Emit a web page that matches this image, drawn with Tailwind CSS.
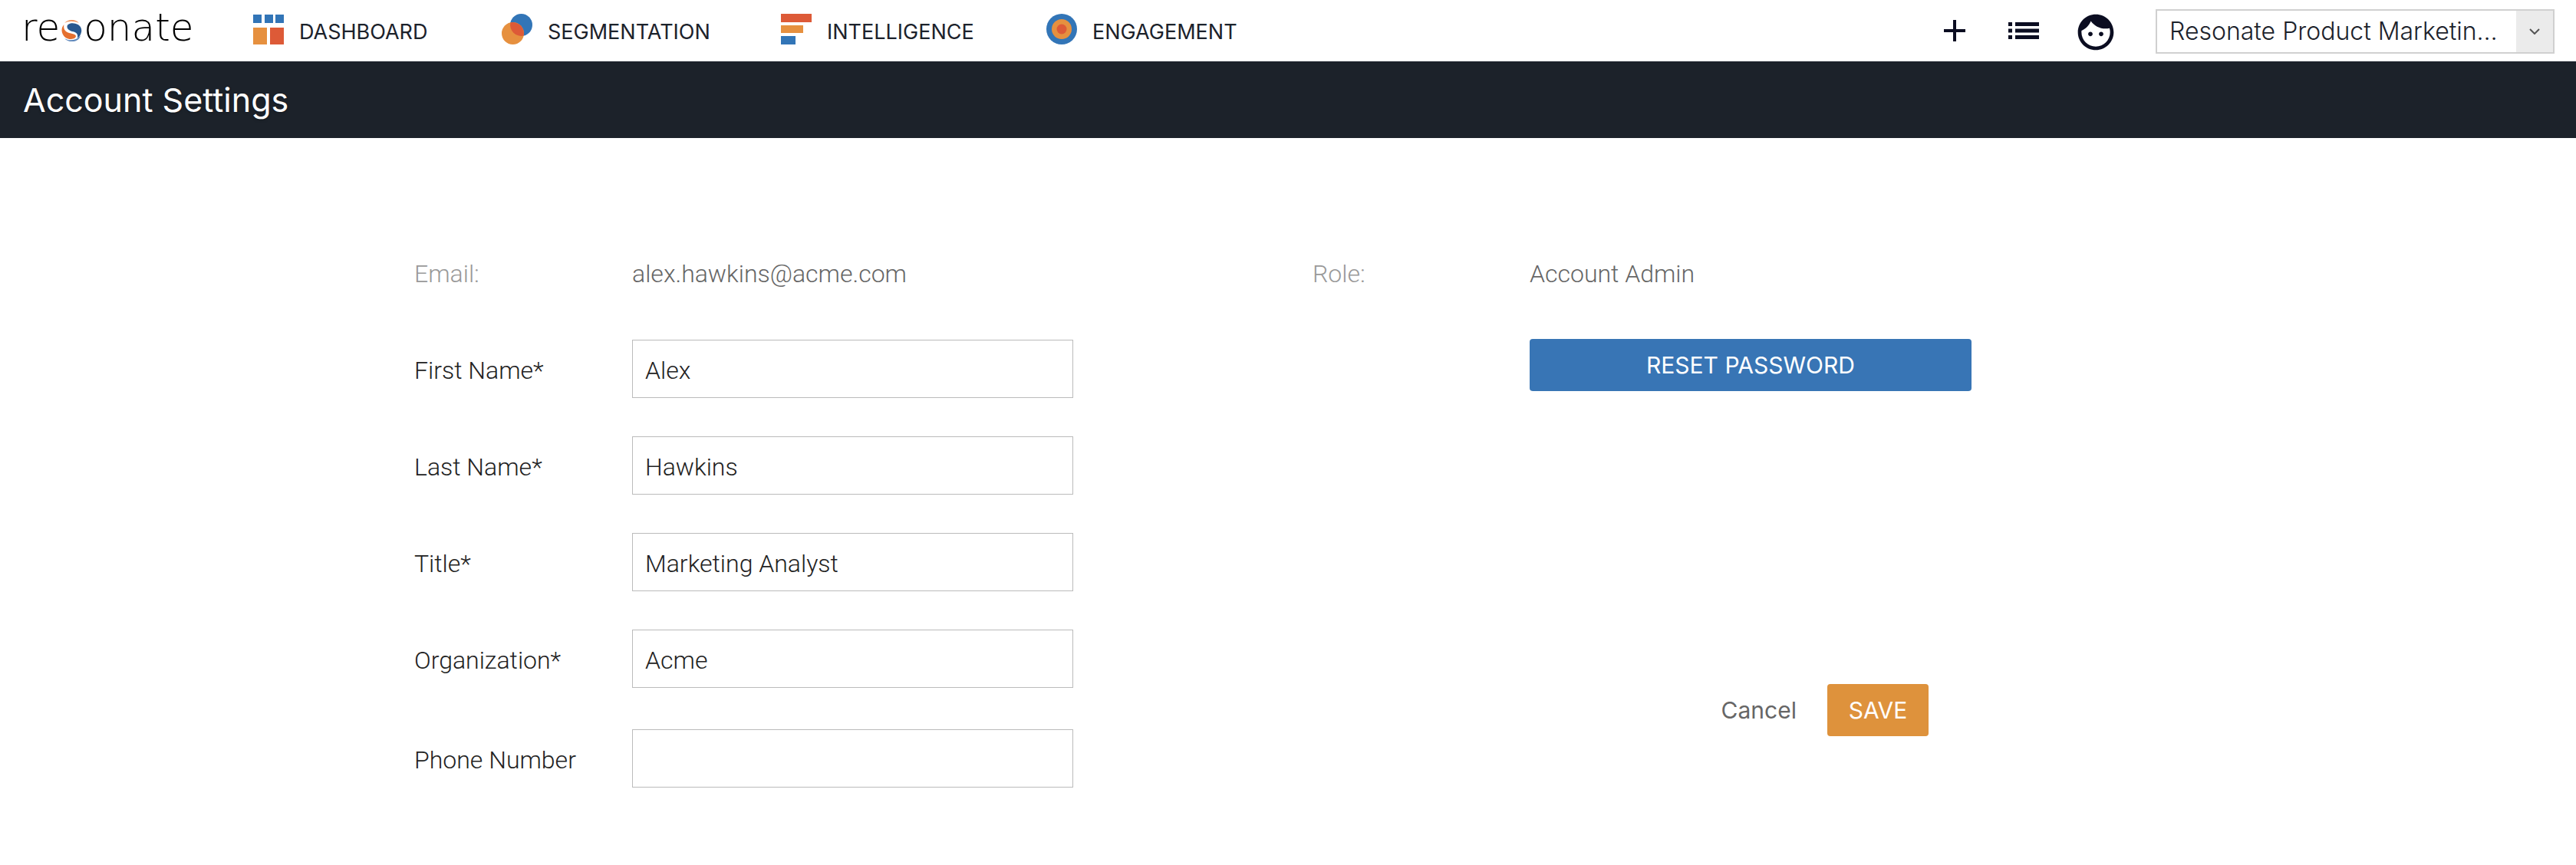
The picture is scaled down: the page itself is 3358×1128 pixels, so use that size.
<!DOCTYPE html>
<html lang="en">
  <head>
    <meta charset="UTF-8" />
    <meta name="viewport" content="width=device-width, initial-scale=1.0" />
    <title>Resonate - Account Settings</title>
    <script src="https://cdn.jsdelivr.net/npm/@tailwindcss/browser@4"></script>
  </head>
  <body class="bg-white font-[Roboto,sans-serif] text-[#222222]">
    <!-- Top navigation -->
    <header
      class="flex h-20 items-center px-7 font-[Inter,sans-serif] text-[#1c222b]"
    >
      <a
        href="#"
        aria-label="resonate"
        class="flex w-[302px] shrink-0 items-center gap-[2px] pb-2 font-['DejaVu_Sans',sans-serif] text-[50px] leading-[56px] font-extralight text-black"
      >
        <span>re</span>
        <svg class="mt-2 h-7 w-[27px] shrink-0" viewBox="0 0 80 84">
          <path d="M12 12C25-3 55-4 68 12C50 4 30 2 12 12z" fill="#ec8a52" />
          <path
            d="M22 26C22 14 40 10 54 14C72 18 80 32 78 46C76 58 70 68 62 72C66 58 60 50 46 46C34 42 22 38 22 26z"
            fill="#28588f"
          />
          <path
            d="M10 18C0 28-1 44 4 54C10 68 24 76 38 75C50 74 58 68 56 62C54 54 40 54 28 50C14 45 6 34 10 18z"
            fill="#e5702f"
          />
          <path
            d="M12 72C30 84 58 80 74 62C70 80 48 88 30 83C22 81 16 78 12 72z"
            fill="#5e87ba"
          />
        </svg>
        <span>onate</span>
      </a>

      <nav class="mb-1 flex items-center text-[27px] leading-8">
        <a href="#" class="flex w-[324px] items-center gap-5">
          <svg class="h-10 w-10 shrink-0" viewBox="0 0 40 40">
            <path d="M0 1h11v11H0zM15 1h11v11H15zM29 1h11v11H29z" fill="#3275b7" />
            <path d="M0 18h18v22H0z" fill="#e6903f" />
            <path d="M22 18h18v22H22z" fill="#dd5a37" />
          </svg>
          <span class="pt-2">DASHBOARD</span>
        </a>
        <a href="#" class="flex w-[364px] items-center gap-5">
          <svg class="h-10 w-10 shrink-0" viewBox="0 0 40 40">
            <circle cx="25.500" cy="14.500" r="14.500" fill="#3275b7" />
            <circle cx="14.500" cy="25.500" r="14.500" fill="#e6903f" />
            <path
              d="M11.400 11.400A14.500 14.500 0 0 1 28.600 28.600A14.500 14.500 0 0 1 11.400 11.400z"
              fill="#dd5a37"
            />
          </svg>
          <span class="pt-2">SEGMENTATION</span>
        </a>
        <a href="#" class="flex w-[346px] items-center gap-5">
          <svg class="h-10 w-10 shrink-0" viewBox="0 0 40 40">
            <path d="M0 0h40v11H0z" fill="#dd5a37" />
            <path d="M0 15h29v10H0z" fill="#e6903f" />
            <path d="M0 29h19v11H0z" fill="#3275b7" />
          </svg>
          <span class="pt-2">INTELLIGENCE</span>
        </a>
        <a href="#" class="flex items-center gap-5">
          <svg class="h-10 w-10 shrink-0" viewBox="0 0 40 40">
            <circle cx="20" cy="20" r="20" fill="#3275b7" />
            <circle cx="20" cy="20" r="13" fill="#e6903f" />
            <circle cx="20" cy="20" r="6.500" fill="#dd5a37" />
          </svg>
          <span class="pt-2">ENGAGEMENT</span>
        </a>
      </nav>

      <div class="ml-auto flex items-center text-[#0b0d21]">
        <button type="button" aria-label="Add" class="mr-[46px]">
          <svg class="h-12 w-12" viewBox="0 0 24 24" fill="currentColor">
            <path d="M19 13h-6v6h-2v-6H5v-2h6V5h2v6h6v2z" />
          </svg>
        </button>
        <button type="button" aria-label="Lists" class="mr-[46px]">
          <svg class="h-[22px] w-10" viewBox="0 0 40 22" fill="currentColor">
            <path
              d="M0 0h5v5H0zM9 0h31v5H9zM0 8.500h5v5H0zM9 8.500h31v5H9zM0 17h5v5H0zM9 17h31v5H9z"
            />
          </svg>
        </button>
        <button type="button" aria-label="Profile" class="mr-[50px] pt-1">
          <svg class="h-14 w-14" viewBox="0 0 24 24" fill="currentColor">
            <path
              d="M9 11.750c-.69 0-1.250.56-1.250 1.250s.56 1.250 1.250 1.250 1.250-.56 1.250-1.250-.56-1.250-1.250-1.250zm6 0c-.69 0-1.250.56-1.250 1.250s.56 1.250 1.250 1.250 1.250-.56 1.250-1.250-.56-1.250-1.250-1.250zM12 2C6.480 2 2 6.480 2 12s4.480 10 10 10 10-4.480 10-10S17.520 2 12 2zm0 18c-4.410 0-8-3.590-8-8 0-.29.02-.58.05-.86 2.360-1.050 4.230-2.980 5.210-5.370C11.070 8.330 14.050 10 17.420 10c.78 0 1.530-.09 2.250-.26.21.71.33 1.470.33 2.260 0 4.410-3.590 8-8 8z"
            />
          </svg>
        </button>
        <div
          class="mt-[2px] flex h-[58px] w-[520px] items-stretch border-2 border-[#d0d0d0] text-[#1c222b]"
        >
          <select
            aria-label="Account"
            class="min-w-0 flex-1 appearance-none bg-white pl-4 text-[32px] leading-9 font-light"
          >
            <option>Resonate Product Marketin…</option>
          </select>
          <span class="flex w-12 items-center justify-center bg-[#ebebeb]">
            <svg class="h-2 w-[14px]" viewBox="0 0 14 8" fill="none">
              <path d="M1 1l6 6 6-6" stroke="#555555" stroke-width="2" />
            </svg>
          </span>
        </div>
      </div>
    </header>

    <!-- Page title -->
    <div class="flex h-[100px] items-center bg-[#1c222a] px-[30px]">
      <h1
        class="font-[Inter,sans-serif] text-[43px] leading-[48px] text-white text-shadow-md"
      >
        Account Settings
      </h1>
    </div>

    <!-- Settings form -->
    <form
      class="mx-auto grid max-w-[2342px] grid-cols-2 pt-[157px] text-[32px] leading-10 font-light"
    >
      <div class="px-8">
        <div class="flex text-[#999999]">
          <span class="w-[284px]">Email:</span>
          <span class="text-[#666666]">alex.hawkins@acme.com</span>
        </div>
        <div class="mt-[66px] flex flex-col gap-[50px]">
          <div class="flex items-center">
            <label for="firstName" class="w-[284px] pt-1">First Name*</label>
            <input
              id="firstName"
              type="text"
              value="Alex"
              class="h-[76px] w-[575px] border border-[#bbbbbb] px-4 pt-1"
            />
          </div>
          <div class="flex items-center">
            <label for="lastName" class="w-[284px] pt-1">Last Name*</label>
            <input
              id="lastName"
              type="text"
              value="Hawkins"
              class="h-[76px] w-[575px] border border-[#bbbbbb] px-4 pt-1"
            />
          </div>
          <div class="flex items-center">
            <label for="title" class="w-[284px] pt-1">Title*</label>
            <input
              id="title"
              type="text"
              value="Marketing Analyst"
              class="h-[76px] w-[575px] border border-[#bbbbbb] px-4 pt-1"
            />
          </div>
          <div class="flex items-center">
            <label for="organization" class="w-[284px] pt-1">Organization*</label>
            <input
              id="organization"
              type="text"
              value="Acme"
              class="h-[76px] w-[575px] border border-[#bbbbbb] px-4 pt-1"
            />
          </div>
          <div class="mt-1 flex items-center">
            <label for="phone" class="w-[284px] pt-1">Phone Number</label>
            <input
              id="phone"
              type="tel"
              class="h-[76px] w-[575px] border border-[#bbbbbb] px-4 pt-1"
            />
          </div>
        </div>
      </div>

      <div class="flex flex-col px-8">
        <div class="flex text-[#999999]">
          <span class="w-[283px]">Role:</span>
          <span class="text-[#666666]">Account Admin</span>
        </div>
        <button
          type="button"
          class="mt-[65px] ml-[283px] h-[68px] w-[576px] rounded bg-[#3875b5] font-[Inter,sans-serif] text-[30px] font-normal text-white"
        >
          RESET PASSWORD
        </button>

        <!-- Actions -->
        <div
          class="mt-auto mb-[67px] flex w-[803px] items-center justify-end gap-10 font-[Inter,sans-serif] text-[30px] font-normal"
        >
          <button type="button" class="text-[#666666]">Cancel</button>
          <button
            type="submit"
            class="h-[68px] w-[132px] rounded bg-[#de923c] text-white"
          >
            SAVE
          </button>
        </div>
      </div>
    </form>
  </body>
</html>
